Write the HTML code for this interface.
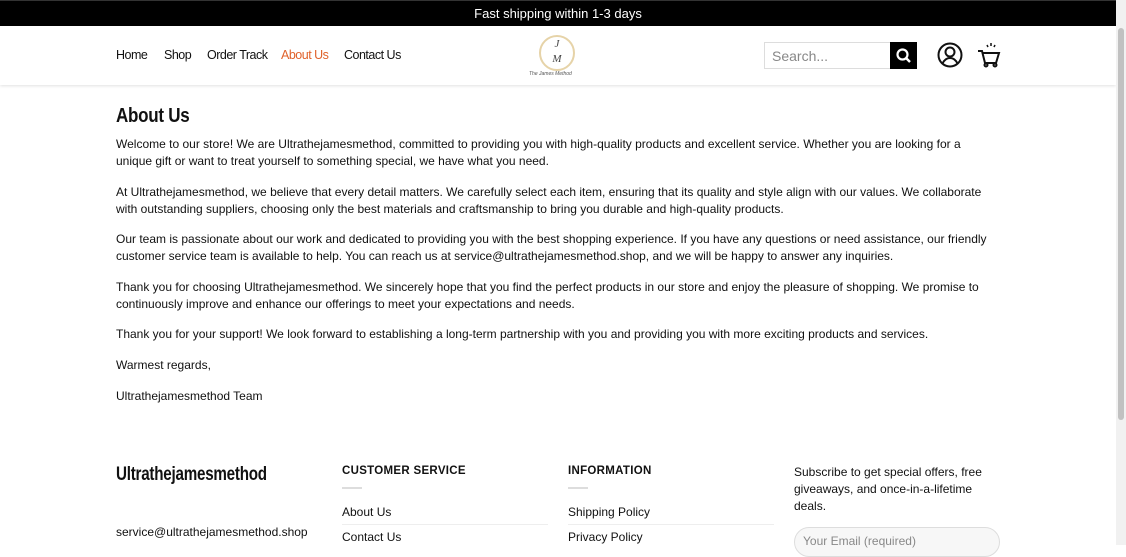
<!DOCTYPE html>
<html><head><meta charset="utf-8"><style>
*{margin:0;padding:0;box-sizing:border-box}
body{width:1126px;height:545px;overflow:hidden;background:#fff;font-family:"Liberation Sans",sans-serif;color:#111;position:relative}
.top{height:26px;background:#000;color:#fff;font-size:13px;text-align:center;line-height:26px;width:1116px;border-top:1px solid #333}
.hdr{position:absolute;top:26px;left:0;width:1116px;height:59px;box-shadow:0 1px 3px rgba(0,0,0,.12)}
.nav span{position:absolute;top:22px;font-size:12.5px;color:#111;letter-spacing:-.5px}
.nav .a{color:#e0622b}
.search{position:absolute;left:764px;top:16px;width:153px;height:27px;border:1px solid #ddd}
.search span{position:absolute;left:7px;top:5px;font-size:14px;color:#888}
.search .b{position:absolute;right:-1px;top:-1px;width:27px;height:27px;background:#000}
.main{position:absolute;left:116px;top:104px;font-size:12px;line-height:17px;color:#111}
h1{font-size:20px;font-weight:bold;margin-bottom:8px;letter-spacing:-.3px;transform:scaleX(.85);transform-origin:left;line-height:24px}
.main p{margin-bottom:13.6px;white-space:nowrap}
.f{position:absolute;font-size:12px;color:#111}
.sb{position:absolute;right:0;top:0;width:10px;height:545px;background:#f1f1f1}
.sb div{position:absolute;left:2px;top:28px;width:6px;height:392px;background:#c1c1c1;border-radius:3px}
.dash{position:absolute;width:20px;height:2px;background:#ddd}
.ln{position:absolute;height:1px;background:#eee}
</style></head><body>
<div class="top">Fast shipping within 1-3 days</div>
<div class="hdr">
<div class="nav"><span style="left:116px">Home</span><span style="left:164px">Shop</span><span style="left:207px">Order Track</span><span class="a" style="left:281px">About Us</span><span style="left:344px">Contact Us</span></div>
<div style="position:absolute;left:539px;top:9px;width:36px;height:36px;border:2px solid #e6d3a8;border-radius:50%;font-family:'Liberation Serif',serif;font-style:italic;font-size:11px;text-align:center;line-height:15px;color:#444">J<br>M</div>
<div style="position:absolute;left:529px;top:45px;font-size:5px;font-style:italic;color:#555">The James Method</div>
<div class="search"><span>Search...</span><div class="b"><svg width="27" height="27" viewBox="0 0 27 27"><circle cx="12.5" cy="12.5" r="5" fill="none" stroke="#fff" stroke-width="2.2"/><path d="M16 16l4 4" stroke="#fff" stroke-width="2.4"/></svg></div></div>
<svg style="position:absolute;left:937px;top:16px" width="26" height="26" viewBox="0 0 26 26" fill="none" stroke="#111" stroke-width="2"><circle cx="13" cy="13" r="11.5"/><circle cx="13" cy="10" r="4.5"/><path d="M5.5 21.5c2-4 5-5.5 7.5-5.5s5.5 1.5 7.5 5.5"/></svg>
<svg style="position:absolute;left:977px;top:16px" width="24" height="26" viewBox="0 0 24 26" fill="none" stroke="#111" stroke-width="2"><path d="M1 9h4l3 12h11l3-10H6"/><circle cx="9" cy="23" r="1.5"/><circle cx="18" cy="23" r="1.5"/><path d="M11 5l-1-2M14 4V1M17 5l1-2" stroke-width="1.5"/></svg>
</div>
<div class="main">
<h1>About Us</h1>
<p>Welcome to our store! We are Ultrathejamesmethod, committed to providing you with high-quality products and excellent service. Whether you are looking for a<br>unique gift or want to treat yourself to something special, we have what you need.</p>
<p>At Ultrathejamesmethod, we believe that every detail matters. We carefully select each item, ensuring that its quality and style align with our values. We collaborate<br>with outstanding suppliers, choosing only the best materials and craftsmanship to bring you durable and high-quality products.</p>
<p>Our team is passionate about our work and dedicated to providing you with the best shopping experience. If you have any questions or need assistance, our friendly<br>customer service team is available to help. You can reach us at service@ultrathejamesmethod.shop, and we will be happy to answer any inquiries.</p>
<p>Thank you for choosing Ultrathejamesmethod. We sincerely hope that you find the perfect products in our store and enjoy the pleasure of shopping. We promise to<br>continuously improve and enhance our offerings to meet your expectations and needs.</p>
<p>Thank you for your support! We look forward to establishing a long-term partnership with you and providing you with more exciting products and services.</p>
<p>Warmest regards,</p>
<p>Ultrathejamesmethod Team</p>
</div>
<div class="f" style="left:116px;top:464px;font-weight:bold;font-size:19px;transform:scaleX(.8);transform-origin:left;letter-spacing:-.3px">Ultrathejamesmethod</div>
<div class="f" style="left:116px;top:525px">service@ultrathejamesmethod.shop</div>
<div class="f" style="left:342px;top:465px;font-weight:bold;font-size:11.5px;letter-spacing:.3px">CUSTOMER SERVICE</div>
<div class="dash" style="left:342px;top:487px"></div>
<div class="f" style="left:342px;top:505px">About Us</div>
<div class="ln" style="left:342px;top:524px;width:206px"></div>
<div class="f" style="left:342px;top:530px">Contact Us</div>
<div class="f" style="left:568px;top:465px;font-weight:bold;font-size:11.5px;letter-spacing:.3px">INFORMATION</div>
<div class="dash" style="left:568px;top:487px"></div>
<div class="f" style="left:568px;top:505px">Shipping Policy</div>
<div class="ln" style="left:568px;top:524px;width:206px"></div>
<div class="f" style="left:568px;top:530px">Privacy Policy</div>
<div class="f" style="left:794px;top:464px;line-height:17px">Subscribe to get special offers, free<br>giveaways, and once-in-a-lifetime<br>deals.</div>
<div style="position:absolute;left:794px;top:527px;width:206px;height:30px;border:1px solid #ddd;border-radius:15px;background:#f7f7f7;font-size:12px;color:#888;padding:6px 8px">Your Email (required)</div>
<div class="sb"><div></div></div>
</body></html>
